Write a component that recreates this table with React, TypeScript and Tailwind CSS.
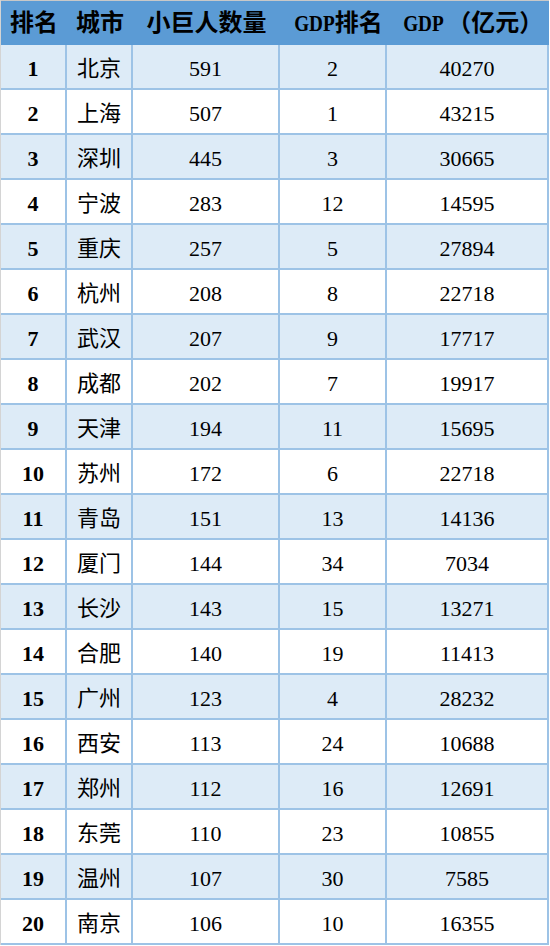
const rows: [number, string, number, number, number][] = [
  [1, '北京', 591, 2, 40270],
  [2, '上海', 507, 1, 43215],
  [3, '深圳', 445, 3, 30665],
  [4, '宁波', 283, 12, 14595],
  [5, '重庆', 257, 5, 27894],
  [6, '杭州', 208, 8, 22718],
  [7, '武汉', 207, 9, 17717],
  [8, '成都', 202, 7, 19917],
  [9, '天津', 194, 11, 15695],
  [10, '苏州', 172, 6, 22718],
  [11, '青岛', 151, 13, 14136],
  [12, '厦门', 144, 34, 7034],
  [13, '长沙', 143, 15, 13271],
  [14, '合肥', 140, 19, 11413],
  [15, '广州', 123, 4, 28232],
  [16, '西安', 113, 24, 10688],
  [17, '郑州', 112, 16, 12691],
  [18, '东莞', 110, 23, 10855],
  [19, '温州', 107, 30, 7585],
  [20, '南京', 106, 10, 16355],
];

const widths = ['w-[66px]', 'w-[66px]', 'w-[147px]', 'w-[107px]', 'w-[162px]'];

function Gdp() {
  // header latin letters are half-width in the original font
  return <span className="inline-block origin-right scale-x-[0.8]">GDP</span>;
}

export default function App() {
  return (
    <div className="w-[550px] h-[946px] bg-white text-black font-['Liberation_Serif','Noto_Sans_CJK_SC',serif]">
      <div className="w-[549px] border-l border-[#d4d4d4]">
        {/* Header */}
        <div className="flex h-[45px] border-t border-[#c8c8c8] bg-[#5b9bd5] text-[24px] font-bold text-black">
          <div className={`${widths[0]} flex items-center justify-center`}>排名</div>
          <div className={`${widths[1]} flex items-center justify-center`}>城市</div>
          <div className={`${widths[2]} flex items-center justify-center`}>小巨人数量</div>
          <div className={`${widths[3]} flex items-center justify-center`}>
            <Gdp />
            <span>排名</span>
          </div>
          <div className={`${widths[4]} flex items-center justify-center`}>
            <Gdp />
            <span className="ml-1">（亿元）</span>
          </div>
        </div>

        {rows.map(([rank, city, count, gdpRank, gdp], i) => (
          <div
            key={rank}
            className={`flex h-[45px] border-b-2 border-[#9dc3e6] text-[22px] text-black ${
              i % 2 === 0 ? 'bg-[#ddebf7]' : 'bg-white'
            }`}
          >
            <div className={`${widths[0]} flex items-center justify-center border-r-2 border-[#9dc3e6] pt-1 font-bold`}>
              {rank}
            </div>
            <div className={`${widths[1]} flex items-center justify-center border-r-2 border-[#9dc3e6] pt-1`}>
              {city}
            </div>
            <div className={`${widths[2]} flex items-center justify-center border-r-2 border-[#9dc3e6] pt-1`}>
              {count}
            </div>
            <div className={`${widths[3]} flex items-center justify-center border-r-2 border-[#9dc3e6] pt-1`}>
              {gdpRank}
            </div>
            <div className={`${widths[4]} flex items-center justify-center border-r-2 border-[#9dc3e6] pt-1`}>
              {gdp}
            </div>
          </div>
        ))}
      </div>
    </div>
  );
}
